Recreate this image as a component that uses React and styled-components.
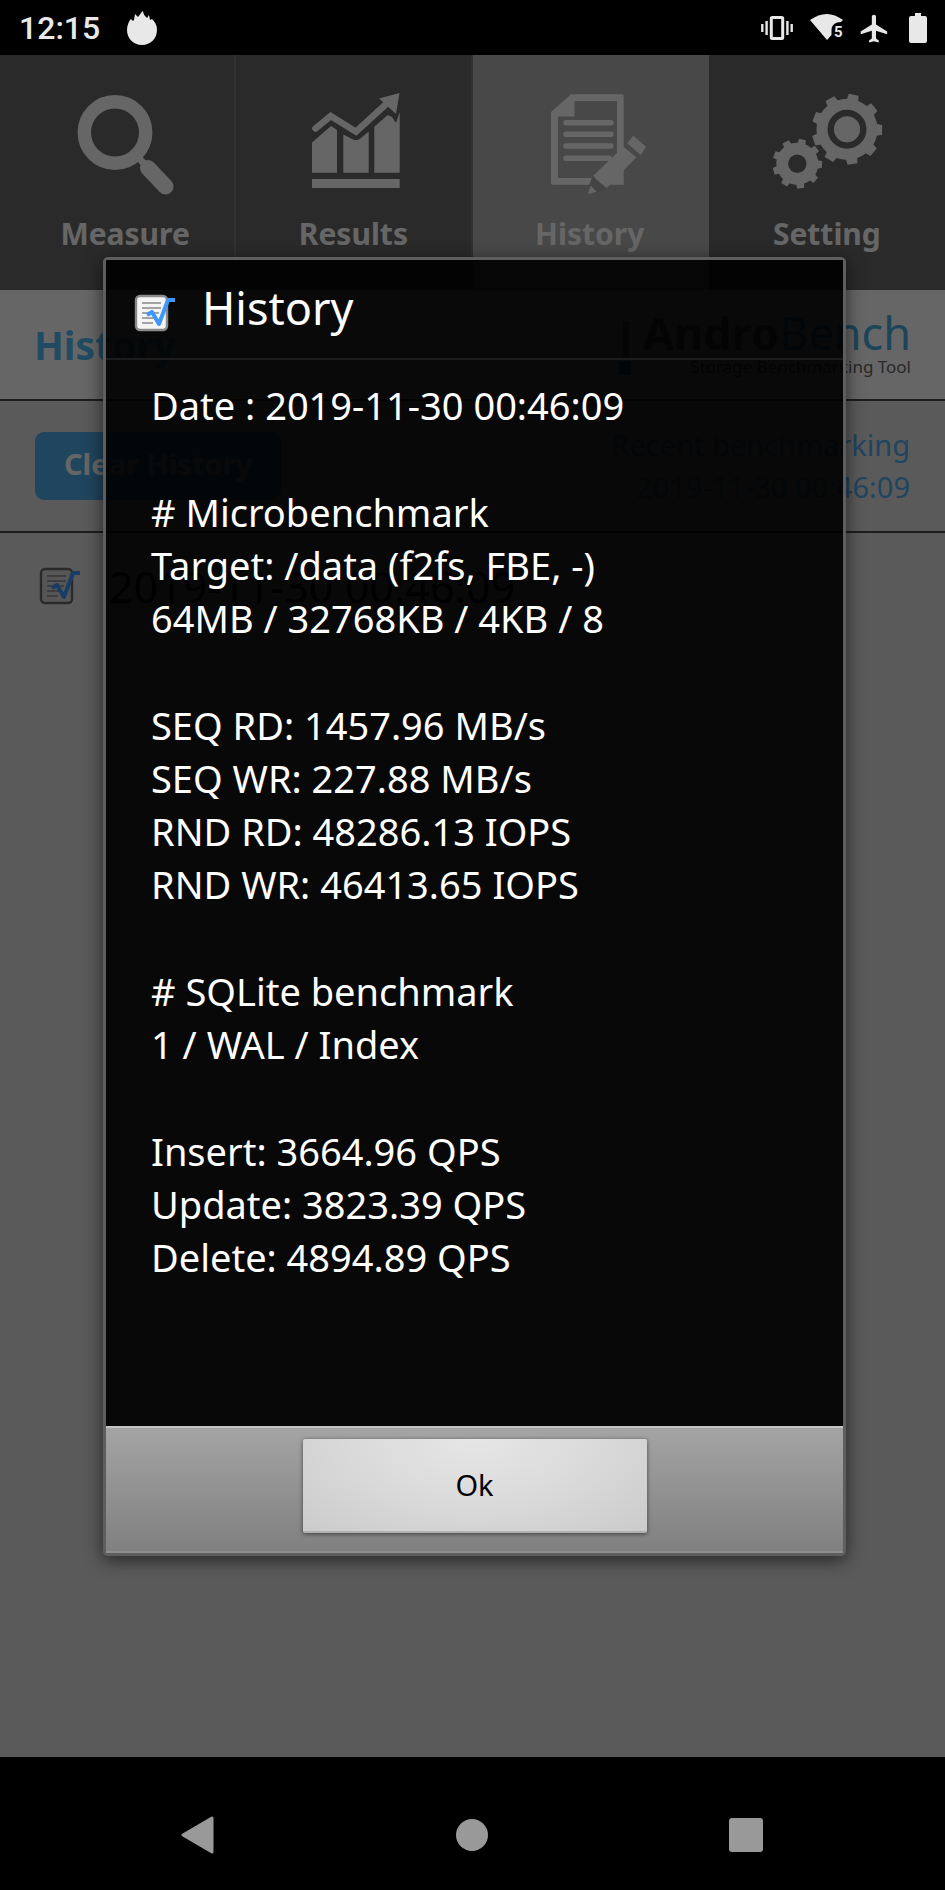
import React from 'react';
import styled, { createGlobalStyle } from 'styled-components';

const tabs = [
  { label: 'Measure', icon: 'measure' },
  { label: 'Results', icon: 'results' },
  { label: 'History', icon: 'history', active: true },
  { label: 'Setting', icon: 'setting' },
];

const report = [
  ['Date : 2019-11-30 00:46:09'],
  ['# Microbenchmark', 'Target: /data (f2fs, FBE, -)', '64MB / 32768KB / 4KB / 8'],
  [
    'SEQ RD: 1457.96 MB/s',
    'SEQ WR: 227.88 MB/s',
    'RND RD: 48286.13 IOPS',
    'RND WR: 46413.65 IOPS',
  ],
  ['# SQLite benchmark', '1 / WAL / Index'],
  ['Insert: 3664.96 QPS', 'Update: 3823.39 QPS', 'Delete: 4894.89 QPS'],
];

// closed outline of a cog with evenly spaced, slightly tapered teeth
const gear = (cx, cy, outer, inner, teeth, start) => {
  const step = 360 / teeth;
  const points = [];
  for (let i = 0; i < teeth; i++) {
    const a = start + i * step;
    [
      [inner, a - step * 0.27],
      [outer, a - step * 0.2],
      [outer, a + step * 0.2],
      [inner, a + step * 0.27],
      [inner, a + step * 0.5],
    ].forEach(([r, deg]) => {
      const t = (deg * Math.PI) / 180;
      points.push(`${(cx + r * Math.cos(t)).toFixed(1)},${(cy + r * Math.sin(t)).toFixed(1)}`);
    });
  }
  return points.join(' ');
};

const TabIcon = ({ name }) => (
  <TabDrawing viewBox='0 0 112 112' aria-hidden='true'>
    {name === 'measure' && (
      <g stroke='#fff' fill='none'>
        <circle cx='46' cy='44.5' r='30.7' strokeWidth='13.4' />
        <path d='M68 68L79 80' strokeWidth='7' />
        <path d='M79 80L96.5 98.5' strokeWidth='16' strokeLinecap='round' />
      </g>
    )}
    {name === 'results' && (
      <g fill='#fff' transform='translate(2 0)'>
        <path d='M13 54.5L32 38L38 42V84.7H13zM44.3 46.5L54 51.5Q58 53.5 62 50L69.7 43.5V84.7H44.3zM75.3 38.7L88.7 27L93 29L97 35L100.7 24V84.7H75.3z' />
        <path d='M13 91H100.7V100H13z' />
        <path
          d='M16.5 40.5L31.7 28L57 43.7L90 13.5'
          fill='none'
          stroke='#fff'
          strokeWidth='6.6'
          strokeLinecap='round'
        />
        <path d='M100.5 5L80 10.5L97 26z' />
      </g>
    )}
    {name === 'history' && (
      <g fill='#fff' transform='translate(1 0)'>
        <path
          fillRule='evenodd'
          d='M36 6.3H86.7Q88.7 6.3 88.7 8.3V96.7H18Q16 96.7 16 94.7V24zM39.5 13V28.5H23V90H82V13z'
        />
        <g stroke='#fff' strokeWidth='5.4' strokeLinecap='round'>
          <path d='M31 34.7H76M31 46.3H76M31 58H76M31 70.3H74' />
        </g>
        <path d='M57.3 88L54 98L61 105L72 100.5z' fill='#a8a8a8' />
        <path d='M88.3 58.7L101.3 69.3L71.7 100.3L58.3 87.7z' />
        <path d='M98.3 47.7L111 58.7L105.7 67L92.3 55.3z' />
        <path d='M55.7 97.5L61.5 103.7L53 106z' />
      </g>
    )}
    {name === 'setting' && (
      <g fill='#fff' transform='translate(2 0)'>
        <polygon points={gear(74, 41.3, 35.5, 30.5, 9, -79)} />
        <circle cx='74' cy='41.3' r='16.3' fill='none' stroke='#6a6a6a' strokeWidth='6.4' />
        <polygon points={gear(24.3, 75.7, 25, 21, 9, -78)} />
        <circle cx='24.3' cy='75.7' r='9.2' fill='#6a6a6a' />
      </g>
    )}
  </TabDrawing>
);

const NoteIcon = ({ outlined }) => (
  <NoteDrawing viewBox='0 0 42 38' aria-hidden='true'>
    <rect
      x='2'
      y='2'
      width='31'
      height='34'
      rx='4'
      fill={outlined ? '#d8d8d8' : '#f4f4f4'}
      stroke={outlined ? '#6a6a6a' : '#8a8a8a'}
      strokeWidth='2.4'
    />
    <path d='M8 9H27M8 14H27M8 19H25M8 24H22M8 29H19' stroke='#888' strokeWidth='1.6' />
    <path
      d='M13 21L18 18L25 30L34 6H41'
      fill='none'
      stroke='#3f97fb'
      strokeWidth='4'
      strokeLinejoin='round'
    />
  </NoteDrawing>
);

const StatusIcons = () => (
  <StatusGroup>
    <svg width='32' height='32' viewBox='0 0 32 32' aria-hidden='true'>
      <path
        d='M1.3 12V20M5.6 9V23M26.4 9V23M30.7 12V20'
        stroke='#e8e8e8'
        strokeWidth='2.4'
      />
      <rect x='10.3' y='5.6' width='11.4' height='20.8' fill='none' stroke='#e8e8e8' strokeWidth='3' rx='1' />
    </svg>
    <svg width='34' height='32' viewBox='0 0 34 32' aria-hidden='true'>
      <path d='M1 8Q18 -4 34 8L32 10Q23 10 22.500 18V23L18 28Z' fill='#e8e8e8' />
      <text x='25' y='25' fontFamily='Roboto' fontWeight='700' fontSize='15' fill='#e8e8e8'>
        5
      </text>
    </svg>
    <svg width='34' height='32' viewBox='0 0 24 23' aria-hidden='true'>
      <path
        d='M20 16v-2l-8-5V3.500c0-.83-.67-1.500-1.500-1.500S9 2.670 9 3.500V9l-8 5v2l8-2.500V19l-2 1.500V22l3.500-1 3.500 1v-1.500L12 19v-5.500l8 2.500z'
        fill='#e8e8e8'
      />
    </svg>
    <svg width='18' height='32' viewBox='0 0 18 32' aria-hidden='true'>
      <path d='M6 1H12V4H16Q18 4 18 6V29Q18 31 16 31H2Q0 31 0 29V6Q0 4 2 4H6z' fill='#e8e8e8' />
    </svg>
  </StatusGroup>
);

const App = () => (
  <Page>
    <GlobalStyle />
    <StatusBar>
      <Clock>12:15</Clock>
      <svg width='30' height='34' viewBox='0 0 30 34' aria-hidden='true'>
        <path
          d='M15 34C6.500 34 0 27.500 0 19C0 14 2 10 4 8L6 10L7 9L8 3L11 6C13 4 14 1 16 0C16 3 18 5 20 7L22 4L23 9L25 8C28 11 30 14 30 19C30 27.500 23.500 34 15 34z'
          fill='#e8e8e8'
        />
      </svg>
      <StatusIcons />
    </StatusBar>

    <Screen>
      <Tabs>
        {tabs.map((tab) => (
          <Tab key={tab.label} type='button' $active={tab.active}>
            <TabIcon name={tab.icon} />
            {tab.label}
          </Tab>
        ))}
      </Tabs>
      <TitleBar>
        <PageTitle>History</PageTitle>
        <Brand>
          <svg width='16' height='64' viewBox='0 0 16 64' aria-hidden='true'>
            <path d='M6 8H12V44H6z' fill='#888' />
            <path d='M2 48H14V62H2z' fill='#2f8fc8' />
          </svg>
          <BrandText>
            <BrandName>
              <b>Andro</b>Bench
            </BrandName>
            <Tagline>Storage Benchmarking Tool</Tagline>
          </BrandText>
        </Brand>
      </TitleBar>
      <ActionBar>
        <ClearButton type='button'>Clear History</ClearButton>
        <Recent>
          Recent benchmarking
          <br />
          2019-11-30 00:46:09
        </Recent>
      </ActionBar>
      <HistoryRow>
        <NoteIcon outlined />
        2019-11-30 00:46:09
      </HistoryRow>

      <Scrim>
        <Dialog role='dialog' aria-labelledby='dialog-title'>
          <DialogHeader>
            <NoteIcon />
            <DialogTitle id='dialog-title'>History</DialogTitle>
          </DialogHeader>
          <DialogBody>
            {report.map((lines) => (
              <Section key={lines[0]}>
                {lines.map((line) => (
                  <p key={line}>{line}</p>
                ))}
              </Section>
            ))}
          </DialogBody>
          <DialogFooter>
            <OkButton type='button'>Ok</OkButton>
          </DialogFooter>
        </Dialog>
      </Scrim>
    </Screen>

    <NavBar>
      <NavButton type='button' aria-label='Back'>
        <svg width='38' height='38' viewBox='0 0 38 38'>
          <path d='M33 2V36L4 19z' fill='#999' stroke='#999' strokeWidth='3' strokeLinejoin='round' />
        </svg>
      </NavButton>
      <NavButton type='button' aria-label='Home'>
        <svg width='38' height='38' viewBox='0 0 38 38'>
          <circle cx='19' cy='19' r='16' fill='#999' />
        </svg>
      </NavButton>
      <NavButton type='button' aria-label='Overview'>
        <svg width='38' height='38' viewBox='0 0 38 38'>
          <rect x='2' y='2' width='34' height='34' rx='3' fill='#999' />
        </svg>
      </NavButton>
    </NavBar>
  </Page>
);

const GlobalStyle = createGlobalStyle`
  * {
    box-sizing: border-box;
    margin: 0;
  }

  body {
    background: #000;
    font-family: 'Noto Sans', 'Open Sans', sans-serif;
  }

  button {
    border: 0;
    padding: 0;
    font-family: inherit;
  }
`;

const Page = styled.div`
  display: flex;
  flex-direction: column;
  min-height: 100vh;
`;

const StatusBar = styled.header`
  display: flex;
  align-items: center;
  gap: 27px;
  height: 55px;
  padding: 0 18px 0 19px;
  background: #000;
`;

const Clock = styled.span`
  color: #e8e8e8;
  font: 500 32px/56px Roboto, sans-serif;
`;

const StatusGroup = styled.div`
  display: flex;
  align-items: center;
  gap: 16px;
  margin-left: auto;
`;

const Screen = styled.main`
  position: relative;
  flex: 1;
  background: #e0e0e0;
`;

const Tabs = styled.nav`
  display: grid;
  grid-template-columns: repeat(4, 1fr);
  height: 235px;
  background: #6a6a6a;
`;

const Tab = styled.button`
  display: flex;
  flex-direction: column;
  align-items: center;
  padding-top: 33px;
  border-right: 2px solid ${({ $active }) => ($active ? '#b4b4b4' : '#7a7a7a')};
  background: ${({ $active }) => ($active ? '#b4b4b4' : 'transparent')};
  color: #fff;
  font-size: 30px;
  font-weight: 700;
  line-height: 40px;

  &:first-child {
    padding-left: 16px;
  }

  &:last-child {
    border-right: 0;
  }
`;

const TabDrawing = styled.svg`
  width: 112px;
  height: 112px;
  margin-bottom: 14px;
`;

const TitleBar = styled.div`
  display: flex;
  align-items: center;
  justify-content: space-between;
  height: 111px;
  padding: 0 34px;
  border-bottom: 2px solid #4a4a4a;
  background: #fff;
`;

const PageTitle = styled.h1`
  color: #52bcf4;
  font-size: 39px;
  line-height: 52px;
`;

const Brand = styled.div`
  display: flex;
  align-items: center;
  gap: 10px;
`;

const BrandText = styled.div`
  padding-bottom: 4px;
  text-align: right;
`;

const BrandName = styled.div`
  color: #48acdf;
  font-size: 45px;
  line-height: 48px;

  b {
    color: #777;
  }
`;

const Tagline = styled.div`
  color: #666;
  font-size: 17px;
  line-height: 20px;
`;

const ActionBar = styled.div`
  display: flex;
  align-items: center;
  justify-content: space-between;
  height: 132px;
  padding: 0 35px;
  border-bottom: 2px solid #4a4a4a;
`;

const ClearButton = styled.button`
  width: 246px;
  height: 68px;
  padding-bottom: 6px;
  border-radius: 9px;
  background: #52acec;
  color: #fff;
  font-size: 29px;
  font-weight: 700;
`;

const Recent = styled.p`
  color: #52acec;
  font-size: 29px;
  line-height: 42px;
  text-align: right;
`;

const HistoryRow = styled.div`
  display: flex;
  align-items: center;
  gap: 28px;
  height: 106px;
  padding: 0 39px;
  color: #000;
  font-size: 43px;
`;

const NoteDrawing = styled.svg`
  width: 42px;
  height: 38px;
`;

const Scrim = styled.div`
  position: absolute;
  inset: 0;
  display: flex;
  align-items: center;
  padding: 0 99px 0 103px;
  background: rgba(0, 0, 0, 0.6);
`;

const Dialog = styled.section`
  flex: 1;
  border: 3px solid #5e5e5e;
  border-radius: 5px;
  box-shadow: 0 4px 18px rgba(0, 0, 0, 0.6);
`;

const DialogHeader = styled.div`
  display: flex;
  align-items: center;
  gap: 26px;
  height: 100px;
  padding: 8px 28px 0;
  border-bottom: 2px solid #1c1c1c;
  background: rgba(0, 0, 0, 0.91);
`;

const DialogTitle = styled.h2`
  color: #fff;
  font-size: 45px;
  font-weight: 400;
  line-height: 60px;
  padding-bottom: 10px;
`;

const DialogBody = styled.div`
  display: flex;
  flex-direction: column;
  gap: 54px;
  min-height: 1066px;
  padding: 19px 45px 60px;
  background: rgba(0, 0, 0, 0.91);
`;

const Section = styled.div`
  color: #fff;
  font-size: 38px;
  line-height: 53px;
`;

const DialogFooter = styled.div`
  display: flex;
  justify-content: center;
  height: 127px;
  padding-top: 11px;
  border-top: 2px solid #c4c4c4;
  border-bottom: 2px solid #8e8e8e;
  background: linear-gradient(#a4a4a4, #808080);
`;

const OkButton = styled.button`
  width: 344px;
  height: 94px;
  border-bottom: 2px solid #b0b0b0;
  border-radius: 2px;
  background: radial-gradient(ellipse at 50% 0, #e6e6e6, #dadada 50%, #cbcbcb);
  box-shadow: 0 1px 4px rgba(0, 0, 0, 0.55);
  color: #000;
  font-size: 29px;
`;

const NavBar = styled.footer`
  display: flex;
  justify-content: space-between;
  height: 133px;
  padding: 59px 180px 0 179px;
  background: #000;
`;

const NavButton = styled.button`
  height: 38px;
  background: none;
`;

export default App;
